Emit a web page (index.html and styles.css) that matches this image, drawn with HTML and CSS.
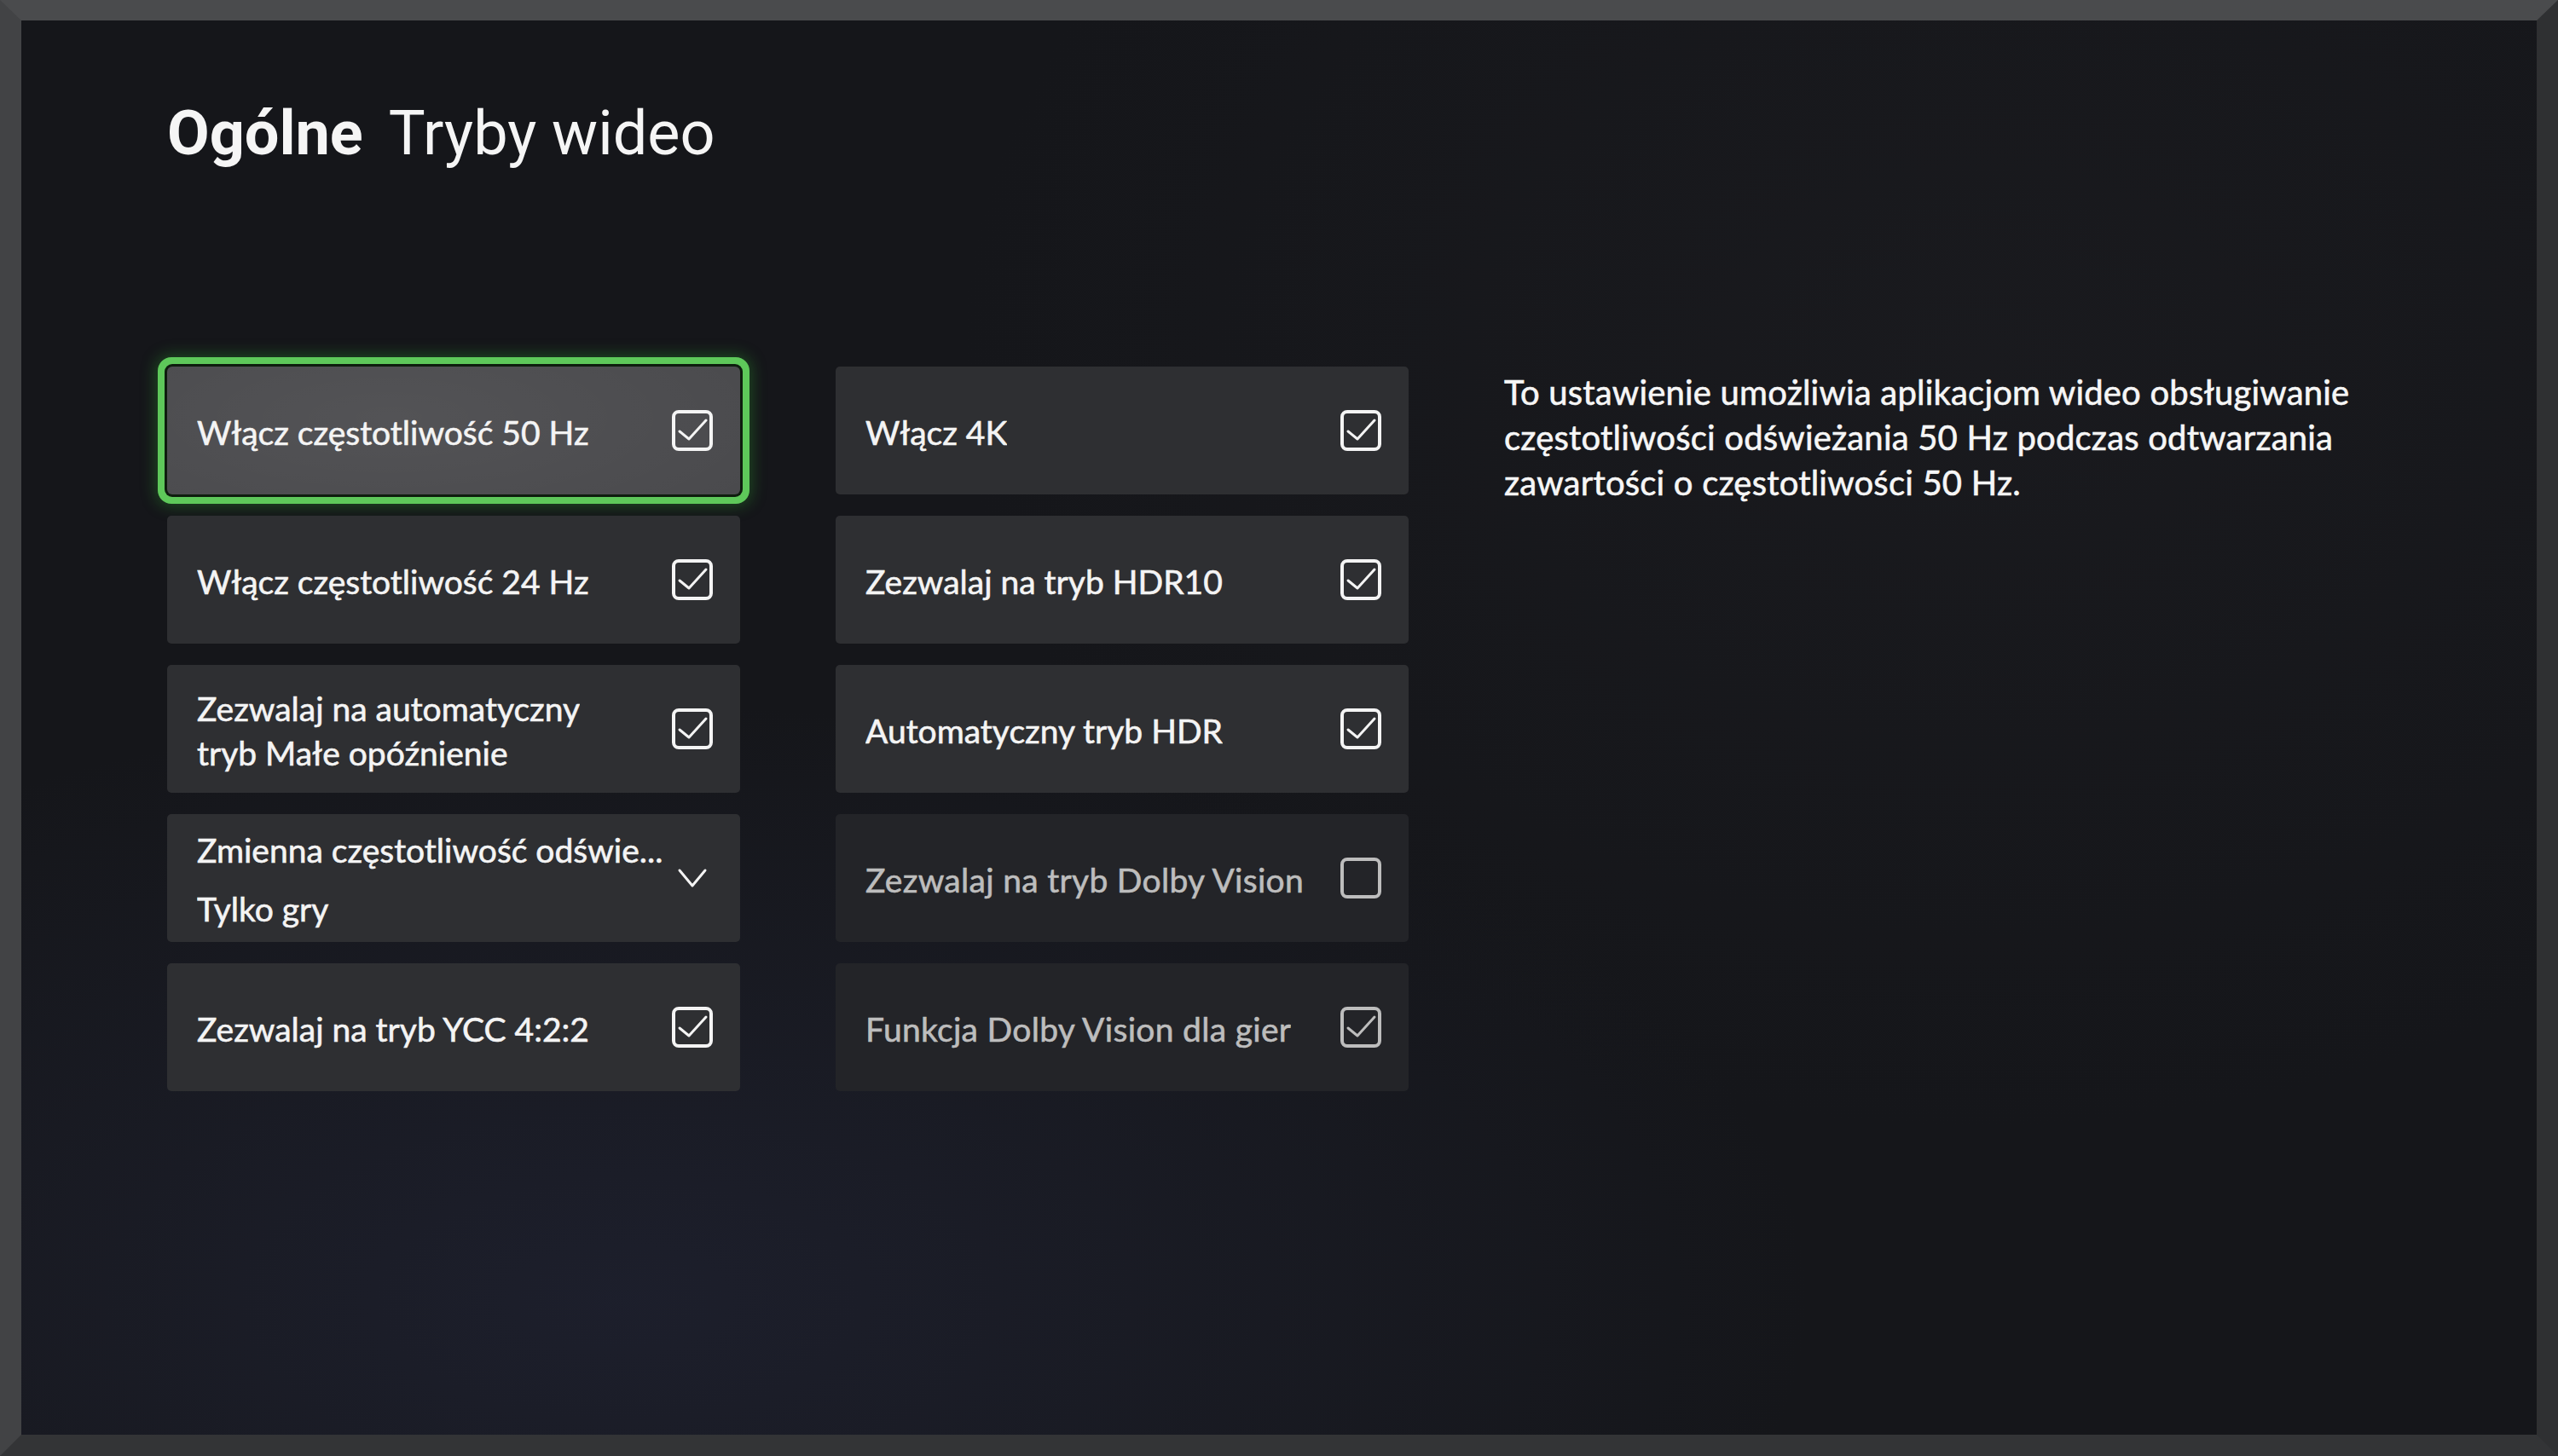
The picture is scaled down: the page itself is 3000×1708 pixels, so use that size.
FILE: index.html
```html
<!DOCTYPE html>
<html>
<head>
    <title>Tryby wideo</title>
    <link rel="stylesheet" href="styles.css">
</head>
<body>
    <div class="screen">
        <h1 class="page-title"><span class="section">Ogólne</span><span class="subsection">Tryby wideo</span></h1>

        <div class="panel">
            <!-- Left column -->
            <div class="column">
                <div class="option focused">
                    <div class="label">Włącz częstotliwość 50 Hz</div>
                    <svg class="check" viewBox="0 0 48 48"><rect x="2" y="2" width="44" height="44" rx="6"/><polyline points="9,25 20,34 40,12"/></svg>
                </div>
                <div class="option">
                    <div class="label">Włącz częstotliwość 24 Hz</div>
                    <svg class="check" viewBox="0 0 48 48"><rect x="2" y="2" width="44" height="44" rx="6"/><polyline points="9,25 20,34 40,12"/></svg>
                </div>
                <div class="option">
                    <div class="label">Zezwalaj na automatyczny<br>tryb Małe opóźnienie</div>
                    <svg class="check" viewBox="0 0 48 48"><rect x="2" y="2" width="44" height="44" rx="6"/><polyline points="9,25 20,34 40,12"/></svg>
                </div>
                <div class="option">
                    <div class="label">
                        <div class="line">Zmienna częstotliwość odświe...</div>
                        <div class="value">Tylko gry</div>
                    </div>
                    <svg class="chevron" viewBox="0 0 48 24"><polyline points="9,3 24,21 39,3"/></svg>
                </div>
                <div class="option">
                    <div class="label">Zezwalaj na tryb YCC 4:2:2</div>
                    <svg class="check" viewBox="0 0 48 48"><rect x="2" y="2" width="44" height="44" rx="6"/><polyline points="9,25 20,34 40,12"/></svg>
                </div>
            </div>

            <!-- Right column -->
            <div class="column">
                <div class="option">
                    <div class="label">Włącz 4K</div>
                    <svg class="check" viewBox="0 0 48 48"><rect x="2" y="2" width="44" height="44" rx="6"/><polyline points="9,25 20,34 40,12"/></svg>
                </div>
                <div class="option">
                    <div class="label">Zezwalaj na tryb HDR10</div>
                    <svg class="check" viewBox="0 0 48 48"><rect x="2" y="2" width="44" height="44" rx="6"/><polyline points="9,25 20,34 40,12"/></svg>
                </div>
                <div class="option">
                    <div class="label">Automatyczny tryb HDR</div>
                    <svg class="check" viewBox="0 0 48 48"><rect x="2" y="2" width="44" height="44" rx="6"/><polyline points="9,25 20,34 40,12"/></svg>
                </div>
                <div class="option disabled">
                    <div class="label">Zezwalaj na tryb Dolby Vision</div>
                    <svg class="check" viewBox="0 0 48 48"><rect x="2" y="2" width="44" height="44" rx="6"/></svg>
                </div>
                <div class="option disabled">
                    <div class="label">Funkcja Dolby Vision dla gier</div>
                    <svg class="check" viewBox="0 0 48 48"><rect x="2" y="2" width="44" height="44" rx="6"/><polyline points="9,25 20,34 40,12"/></svg>
                </div>
            </div>

            <!-- Help text for the focused option -->
            <p class="description">To ustawienie umożliwia aplikacjom wideo obsługiwanie częstotliwości odświeżania 50 Hz podczas odtwarzania zawartości o częstotliwości 50 Hz.</p>
        </div>
    </div>
</body>
</html>
```

FILE: styles.css
```css
html, body {
    margin: 0;
    padding: 0;
}

body {
    width: 3000px;
    height: 1708px;
    background-color: #3a3b3d;
    font-family: "Lato", "Open Sans", sans-serif;
    color: #f4f4f4;
}

/* TV bezel around the picture */
.screen {
    box-sizing: border-box;
    width: 3000px;
    height: 1708px;
    border-style: solid;
    border-width: 24px 25px 25px 25px;
    border-color: #4a4b4d #2f3032 #333436 #424345;
    padding: 90px 0 0 171px;
    background-color: #15161a;
    background-image:
        radial-gradient(ellipse 1400px 700px at 700px 1500px, rgba(40, 44, 70, 0.4), rgba(40, 44, 70, 0) 100%),
        radial-gradient(ellipse 1200px 900px at 2300px 400px, rgba(30, 30, 34, 0.5), rgba(30, 30, 34, 0) 100%);
}

.page-title {
    margin: 0;
    font-family: "Roboto", "Liberation Sans", sans-serif;
    font-size: 72px;
    line-height: 86px;
    font-weight: 400;
    color: #f5f5f5;
}

.section {
    font-weight: 700;
    margin-right: 30px;
}

.panel {
    display: flex;
    align-items: flex-start;
    gap: 112px;
    margin-top: 230px;
}

.column {
    display: flex;
    flex-direction: column;
    gap: 25px;
    width: 672px;
}

/* Option card */
.option {
    box-sizing: border-box;
    height: 150px;
    display: flex;
    align-items: center;
    justify-content: space-between;
    padding: 3px 32px 0 35px;
    background-color: #2e2f32;
    border-radius: 5px;
    font-size: 39px;
    line-height: 52px;
    -webkit-text-stroke: 0.6px currentColor;
}

.label {
    white-space: nowrap;
    overflow: hidden;
}

.label .value {
    margin-top: 17px;
}

.option.focused {
    background-color: #4a4a4d;
    background-image: radial-gradient(ellipse 500px 160px at 260px 60px, rgba(255, 255, 255, 0.05), rgba(255, 255, 255, 0));
    box-shadow:
        0 0 0 3px #0e1d0e,
        0 0 0 11px #5ec85a,
        0 0 18px 13px rgba(50, 180, 50, 0.35);
    border-radius: 6px;
}

.option.disabled {
    background-color: #232428;
    color: #bdbdbd;
    letter-spacing: 0.3px;
}

.check {
    flex: none;
    width: 48px;
    height: 48px;
    margin-top: -3px;
    fill: none;
    stroke: #f4f4f4;
}

.check rect {
    stroke-width: 4;
}

.check polyline {
    stroke-width: 3;
    stroke-linecap: round;
    stroke-linejoin: round;
}

.option.disabled .check {
    stroke: #bdbdbd;
}

.chevron {
    flex: none;
    width: 48px;
    height: 24px;
    margin-top: -3px;
    fill: none;
    stroke: #f4f4f4;
    stroke-width: 3;
    stroke-linecap: round;
    stroke-linejoin: round;
}

.description {
    margin: 4px 0 0 0;
    width: 1080px;
    font-size: 40px;
    line-height: 53px;
    letter-spacing: 0.2px;
    color: #f6f6f6;
    -webkit-text-stroke: 0.6px currentColor;
}
```
